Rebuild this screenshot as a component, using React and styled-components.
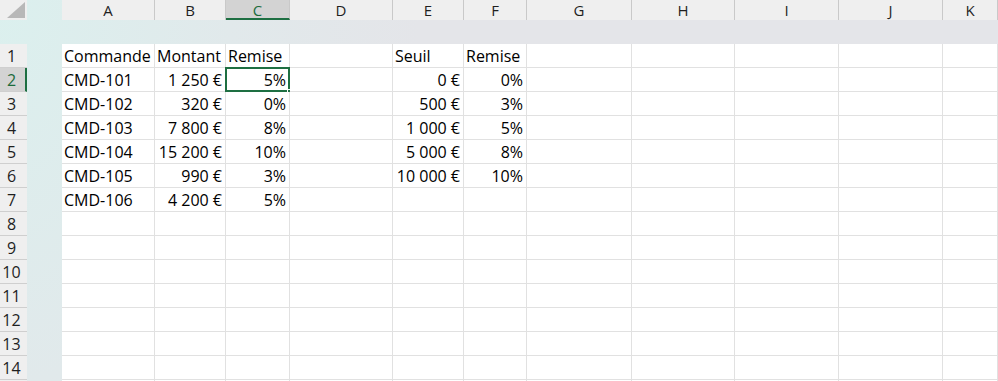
import React from 'react';
import styled, { createGlobalStyle } from 'styled-components';

const GlobalStyle = createGlobalStyle`
  html, body {
    margin: 0;
    padding: 0;
    background: #ffffff;
    overflow: hidden;
  }
`;

const COLS = ['A', 'B', 'C', 'D', 'E', 'F', 'G', 'H', 'I', 'J', 'K'];
const NUM_ROWS = 14;

// right aligned values are numbers, left aligned are labels
const n = (s) => ({ v: s, right: true });
const DATA = {
  1: { A: 'Commande', B: 'Montant', C: 'Remise', E: 'Seuil', F: 'Remise' },
  2: { A: 'CMD-101', B: n('1\u00a0250\u00a0€'), C: n('5%'), E: n('0\u00a0€'), F: n('0%') },
  3: { A: 'CMD-102', B: n('320\u00a0€'), C: n('0%'), E: n('500\u00a0€'), F: n('3%') },
  4: { A: 'CMD-103', B: n('7\u00a0800\u00a0€'), C: n('8%'), E: n('1\u00a0000\u00a0€'), F: n('5%') },
  5: { A: 'CMD-104', B: n('15\u00a0200\u00a0€'), C: n('10%'), E: n('5\u00a0000\u00a0€'), F: n('8%') },
  6: { A: 'CMD-105', B: n('990\u00a0€'), C: n('3%'), E: n('10\u00a0000\u00a0€'), F: n('10%') },
  7: { A: 'CMD-106', B: n('4\u00a0200\u00a0€'), C: n('5%') },
};

const ACTIVE = { col: 'C', row: 2 };

const Sheet = styled.div`
  display: grid;
  grid-template-columns: 27px 35px 93px 71px 64px 103px 71px 63px 105px 103px 104px 104px 1fr;
  grid-template-rows: 20px 24px repeat(${NUM_ROWS + 1}, 24px);
  width: 998px;
  height: 381px;
  overflow: hidden;
  background: radial-gradient(ellipse 420px 700px at 0 0, #dbf0ee 0%, #e1e9eb 55%, #e4e5e9 100%);
  font-family: 'Open Sans', 'Liberation Sans', sans-serif;
`;

const Corner = styled.div`
  background: #efefef;
  display: flex;
  align-items: flex-start;
  justify-content: flex-end;
  padding: 1px 1px 0 0;
  box-sizing: border-box;
`;

const Gap = styled.div``;

const Band = styled.div`
  grid-column: 1 / -1;
`;

const ColHeader = styled.div`
  background: ${(p) => (p.$active ? '#d3d3d3' : '#efefef')};
  color: ${(p) => (p.$active ? '#1c6b3c' : '#1f1f1f')};
  border-right: 1px solid #c9c9c9;
  border-bottom: ${(p) => (p.$active ? '2px solid #1e6f42' : '0')};
  box-sizing: border-box;
  font-size: 15px;
  display: flex;
  align-items: center;
  justify-content: center;
  line-height: 1;
  padding-top: ${(p) => (p.$active ? '2px' : '0')};
`;

const RowHeader = styled.div`
  background: ${(p) => (p.$active ? '#d3d3d3' : '#efefef')};
  color: ${(p) => (p.$active ? '#1c6b3c' : '#1f1f1f')};
  border-bottom: 1px solid #cfcfcf;
  border-right: ${(p) => (p.$active ? '2px solid #1e6f42' : '0')};
  box-sizing: border-box;
  font-size: 16px;
  display: flex;
  align-items: center;
  justify-content: center;
  padding-right: ${(p) => (p.$active ? '2px' : '4px')};
  line-height: 1;
`;

const Cell = styled.div`
  position: relative;
  background: #ffffff;
  border-right: 1px solid #e1e1e1;
  border-bottom: 1px solid #e1e1e1;
  box-sizing: border-box;
  font-size: 16px;
  color: #000000;
  display: flex;
  align-items: center;
  justify-content: ${(p) => (p.$right ? 'flex-end' : 'flex-start')};
  padding: 1px 3px 0 2px;
  white-space: nowrap;
  overflow: visible;
  line-height: 1;

  ${(p) =>
    p.$selected &&
    `
    &::before {
      content: '';
      position: absolute;
      left: -1px;
      top: -1px;
      right: -1px;
      bottom: -1px;
      border: 2px solid #1e6f42;
      pointer-events: none;
    }
    &::after {
      content: '';
      position: absolute;
      right: -3px;
      bottom: -3px;
      width: 5px;
      height: 5px;
      background: #1e6f42;
      border: 1px solid #ffffff;
      box-sizing: border-box;
    }
  `}
`;

const CornerMark = () => (
  <svg width="21" height="18" viewBox="0 0 21 18">
    <polygon points="20,1 20,17 2,17" fill="#b8b8b8" />
  </svg>
);

const App = () => {
  const rows = Array.from({ length: NUM_ROWS + 1 }, (_, i) => i + 1);
  return (
    <>
      <GlobalStyle />
      <Sheet>
        <Corner>
          <CornerMark />
        </Corner>
        <Gap />
        {COLS.map((c) => (
          <ColHeader key={c} $active={c === ACTIVE.col}>
            {c}
          </ColHeader>
        ))}
        <Band />
        {rows.map((r) => (
          <React.Fragment key={r}>
            {/* the last row only peeks in by a pixel, so no number */}
            <RowHeader $active={r === ACTIVE.row}>{r <= NUM_ROWS ? r : ''}</RowHeader>
            <Gap />
            {COLS.map((c) => {
              const raw = DATA[r] && DATA[r][c];
              const val = raw && typeof raw === 'object' ? raw.v : raw;
              const right = raw && typeof raw === 'object' && raw.right;
              return (
                <Cell
                  key={c}
                  $right={right}
                  $selected={r === ACTIVE.row && c === ACTIVE.col}
                >
                  {val}
                </Cell>
              );
            })}
          </React.Fragment>
        ))}
      </Sheet>
    </>
  );
};

export default App;
